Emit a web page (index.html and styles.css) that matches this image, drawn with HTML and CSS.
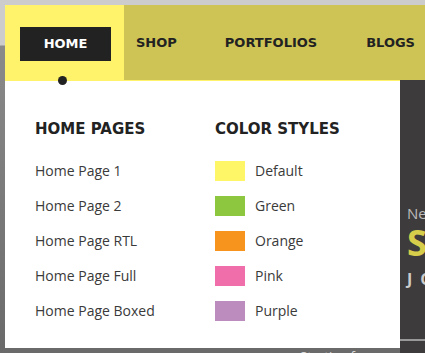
FILE: index.html
```html
<!DOCTYPE html>
<html lang="en">
<head>
    <meta charset="UTF-8">
    <meta name="viewport" content="width=device-width, initial-scale=1.0">
    <title>Mega Menu</title>
    <link rel="stylesheet" href="styles.css">
</head>
<body>
    <div class="page">
        <nav class="navbar">
            <div class="nav-item home-tab">
                <a href="#" class="home-btn">HOME</a>
            </div>
            <a href="#" class="nav-item shop">SHOP</a>
            <a href="#" class="nav-item portfolios">PORTFOLIOS</a>
            <a href="#" class="nav-item blogs">BLOGS</a>
        </nav>
        <div class="hero">
            <div class="hero-left">
                <span class="starting">Starting from</span>
            </div>
            <div class="hero-card">
                <p class="card-small">New</p>
                <p class="card-big">SALE</p>
                <p class="card-sub">JOIN</p>
                <div class="card-line"></div>
            </div>
        </div>
        <div class="dropdown">
            <div class="col">
                <h3>HOME PAGES</h3>
                <ul>
                    <li>Home Page 1</li>
                    <li>Home Page 2</li>
                    <li>Home Page RTL</li>
                    <li>Home Page Full</li>
                    <li>Home Page Boxed</li>
                </ul>
            </div>
            <div class="col">
                <h3>COLOR STYLES</h3>
                <ul>
                    <li><span class="swatch yellow"></span>Default</li>
                    <li><span class="swatch green"></span>Green</li>
                    <li><span class="swatch orange"></span>Orange</li>
                    <li><span class="swatch pink"></span>Pink</li>
                    <li><span class="swatch purple"></span>Purple</li>
                </ul>
            </div>
        </div>
    </div>
</body>
</html>
```

FILE: styles.css
```css
body {
    margin: 0;
    padding: 0;
    background: linear-gradient(#cccccc 0, #cccccc 45px, #8a8a8a 46px, #6a6a6a 100%);
    overflow: hidden;
    height: 353px;
}

.page {
    position: relative;
    padding: 5px 0 0 5px;
    width: 420px;
    height: 348px;
    overflow: hidden;
}

.navbar {
    display: flex;
    align-items: center;
    height: 75px;
    width: 600px;
    background-color: #cec455;
    font-family: 'DejaVu Sans', sans-serif;
    font-weight: bold;
    font-size: 13px;
}

.nav-item {
    color: #222;
    text-decoration: none;
    flex-shrink: 0;
}

.home-tab {
    height: 100%;
    display: flex;
    align-items: center;
    padding: 0 13px 0 15px;
    background-color: #fef36a;
    position: relative;
}

.home-tab::after {
    content: "";
    position: absolute;
    left: 53px;
    bottom: -5px;
    width: 9px;
    height: 9px;
    border-radius: 50%;
    background-color: #222;
    z-index: 3;
}

.home-btn {
    display: block;
    width: 91px;
    height: 34px;
    line-height: 34px;
    margin-top: 2px;
    text-align: center;
    background-color: #222;
    color: #fff;
    text-decoration: none;
}

.shop {
    margin-left: 12px;
}

.portfolios {
    margin-left: 48px;
}

.blogs {
    margin-left: 49px;
}

.hero {
    display: flex;
    width: 700px;
    height: 273px;
    margin-left: -5px;
}

.hero-left {
    width: 400px;
    flex-shrink: 0;
    position: relative;
}

.starting {
    position: absolute;
    left: 300px;
    bottom: -12px;
    color: #ddd;
    font-family: 'Open Sans', sans-serif;
    font-size: 13px;
}

.hero-card {
    width: 300px;
    flex-shrink: 0;
    background-color: #3e3b3c;
    padding-left: 7px;
    font-family: 'Open Sans', sans-serif;
    position: relative;
}

.card-small {
    margin: 124px 0 0;
    color: #bbb;
    font-size: 15px;
    line-height: 18px;
}

.card-big {
    margin: 2px 0 0;
    color: #d6cd4a;
    font-size: 36px;
    font-weight: bold;
    line-height: 38px;
}

.card-sub {
    margin: 6px 0 0;
    color: #ccc;
    font-size: 16px;
    font-weight: bold;
    letter-spacing: 8px;
}

.card-line {
    position: absolute;
    left: 0;
    right: 0;
    top: 259px;
    height: 2px;
    background-color: #999;
}

.dropdown {
    position: absolute;
    left: 5px;
    top: 80px;
    width: 365px;
    height: 267px;
    padding-left: 30px;
    background-color: #fff;
    border-top: 1px solid #fef36a;
    display: flex;
    z-index: 2;
}

.col {
    width: 180px;
}

.col h3 {
    margin: 39px 0 0;
    font-family: 'DejaVu Sans', sans-serif;
    font-weight: bold;
    font-size: 15px;
    color: #222;
}

.col ul {
    list-style: none;
    margin: 15px 0 0;
    padding: 0;
}

.col li {
    display: flex;
    align-items: center;
    height: 35px;
    font-family: 'Open Sans', sans-serif;
    font-size: 14px;
    color: #3a3a3a;
}

.swatch {
    display: inline-block;
    width: 30px;
    height: 20px;
    margin-right: 10px;
}

.yellow { background-color: #fef567; }
.green { background-color: #8dc63f; }
.orange { background-color: #f7941d; }
.pink { background-color: #f06eaa; }
.purple { background-color: #bd8cbf; }
```
